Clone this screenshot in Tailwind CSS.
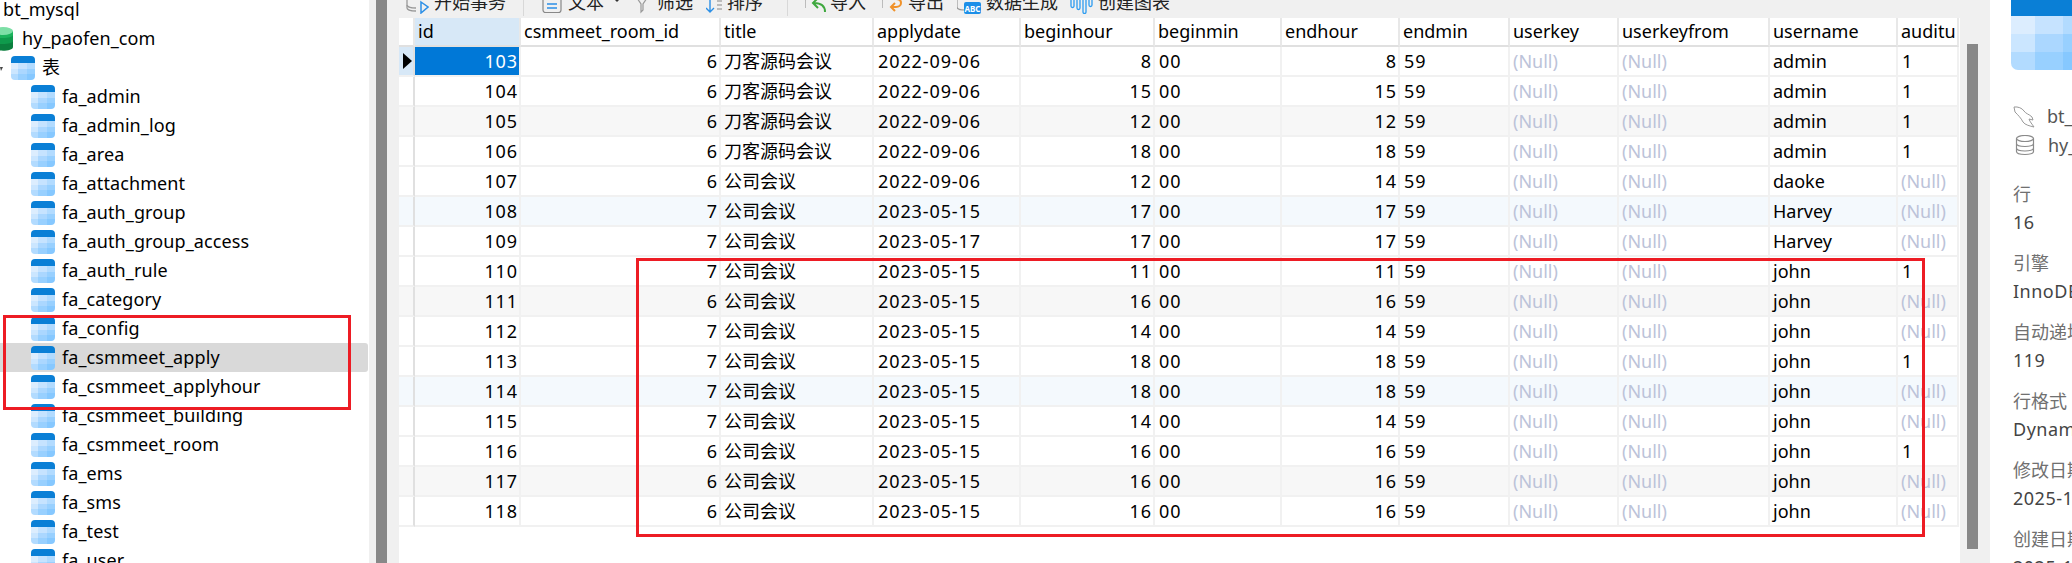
<!DOCTYPE html>
<html lang="zh-CN">
<head>
  <meta charset="UTF-8" />
  <title>Navicat - fa_csmmeet_apply</title>
  <script src="https://cdn.jsdelivr.net/npm/@tailwindcss/browser@4"></script>
</head>
<body class="relative flex w-[2072px] h-[563px] overflow-hidden bg-white text-black text-[18px] font-['Noto_Sans','Noto_Sans_CJK_SC',sans-serif]">

  <!-- shared table icon -->
  <svg class="absolute w-0 h-0">
    <symbol id="tbl" viewBox="0 0 24 24">
      <path d="M0 7V4a4 4 0 0 1 4-4h16a4 4 0 0 1 4 4v3z" fill="#0a7fd6"/>
      <rect x="0" y="7" width="7" height="6" fill="#dcedfe"/>
      <rect x="7" y="7" width="9" height="6" fill="#c6e3ff"/>
      <rect x="16" y="7" width="8" height="6" fill="#b2dbff"/>
      <rect x="0" y="13" width="7" height="5" fill="#cbe6ff"/>
      <rect x="7" y="13" width="9" height="5" fill="#abd7ff"/>
      <rect x="16" y="13" width="8" height="5" fill="#98d0ff"/>
      <path d="M0 18h7v6H4a4 4 0 0 1-4-4z" fill="#b2dbff"/>
      <rect x="7" y="18" width="9" height="6" fill="#98d0ff"/>
      <path d="M16 18h8v2a4 4 0 0 1-4 4h-4z" fill="#86c8ff"/>
    </symbol>
  </svg>

  <!-- connection tree -->
  <aside class="w-[369px] shrink-0 -mt-[5px] tracking-[0.1px]" id="tree">
    <div class="h-[29px] pl-[3px] flex items-center">bt_mysql</div>
    <div class="h-[29px] flex items-center gap-[9px]">
      <svg class="w-[13px] h-[24px] shrink-0" viewBox="7 0 13 24">
        <path d="M0 4h20v16c0 5-20 5-20 0z" fill="#0b7f3e"/>
        <path d="M0 4h20v10c0 4-20 4-20 0z" fill="#0f9a4c"/>
        <path d="M0 4h20v4c0 4-20 4-20 0z" fill="#1bb35c"/>
        <ellipse cx="10" cy="4" rx="10" ry="4" fill="#7ddfa6"/>
      </svg>
      <span>hy_paofen_com</span>
    </div>
    <div class="relative h-[29px] pl-[11px] flex items-center gap-[7px]">
      <svg class="absolute left-0 top-[14px] w-[3px] h-[4px]" viewBox="0 0 3 4"><path d="M0 0h3L1 4z" fill="#444"/></svg>
      <svg class="w-[24px] h-[24px] shrink-0 mt-[1px]"><use href="#tbl"/></svg>
      <span>表</span>
    </div>
  </aside>

  <!-- tree scrollbar -->
  <div class="w-[30px] shrink-0 bg-[#f0f0f0] pl-[7px]">
    <div class="w-[11px] h-full bg-[#888888]"></div>
  </div>

  <main class="w-[1561px] shrink-0 bg-white">
    <!-- toolbar, its upper part is cut off by the crop -->
    <div class="h-[18px] bg-[#f0f0f0] overflow-hidden">
      <div class="-mt-[10px] h-[24px] pl-[7px] flex items-center whitespace-nowrap text-[#222]">
        <svg class="w-[23px] h-[24px] shrink-0" viewBox="0 0 23 24" fill="none">
          <path d="M1 10v8c0 2 5 3 9 3" stroke="#999" stroke-width="1.3"/>
          <path d="M1 15c0 2 5 3 9 3" stroke="#999" stroke-width="1.3"/>
          <path d="M15 12l7 5-7 6z" stroke="#2b8fe6" stroke-width="1.5"/>
        </svg>
        <span class="ml-[5px] w-[72px]">开始事务</span>
        <div class="ml-[17px] w-px h-[26px] self-start bg-[#d8d8d8] shrink-0"></div>
        <svg class="ml-[18px] w-[20px] h-[24px] shrink-0" viewBox="0 0 20 24" fill="none">
          <path d="M1 8v12a2.500 2.500 0 0 0 2.500 2.500h13a2.500 2.500 0 0 0 2.500-2.500V8" stroke="#888" stroke-width="1.2"/>
          <path d="M5 14h10M5 18h10" stroke="#2b8fe6" stroke-width="1.5"/>
        </svg>
        <span class="ml-[6px] w-[36px]">文本</span>
        <svg class="ml-[10px] w-[6px] h-[24px] shrink-0" viewBox="0 0 6 24"><path d="M0 9h6l-3 3z" fill="#333"/></svg>
        <svg class="ml-[17px] w-[10px] h-[24px] shrink-0" viewBox="0 0 10 24" fill="none"><path d="M0 8l4 6v8l2-2v-6l4-6" stroke="#999" stroke-width="1.2"/></svg>
        <span class="ml-[10px] w-[36px]">筛选</span>
        <svg class="ml-[13px] w-[16px] h-[24px] shrink-0" viewBox="0 0 16 24" fill="none">
          <path d="M4 8v14M0 18l4 4 4-4" stroke="#2b8fe6" stroke-width="1.4"/>
          <path d="M11 11h5M11 15h5M11 19h5" stroke="#888" stroke-width="1.2"/>
        </svg>
        <span class="ml-[5px] w-[40px]">排序</span>
        <div class="ml-[20px] w-px h-[26px] self-start bg-[#d8d8d8] shrink-0"></div>
        <svg class="ml-[17px] w-[21px] h-[24px] shrink-0" viewBox="0 0 21 24" fill="none">
          <path d="M3 8c-2 0-3 1-3 3v7" stroke="#999" stroke-width="1.2"/>
          <path d="M20 22c0-6-3-9-11-9M13 8l-5 5 5 5" stroke="#3fa83f" stroke-width="2"/>
        </svg>
        <span class="ml-[4px] w-[36px]">导入</span>
        <svg class="ml-[16px] w-[21px] h-[24px] shrink-0" viewBox="0 0 21 24" fill="none">
          <path d="M3 8c-2 0-3 1-3 3v7" stroke="#999" stroke-width="1.2"/>
          <path d="M9 9h5c4 0 5 2 5 4s-2 4-5 4H9M13 13l-4 4 4 4" stroke="#f0922b" stroke-width="2"/>
        </svg>
        <span class="ml-[5px] w-[36px]">导出</span>
        <div class="relative ml-[13px] w-[24px] h-[24px] shrink-0">
          <svg class="w-[24px] h-[24px]" viewBox="0 0 24 24" fill="none"><path d="M0 8v9c0 2 4 3 8 3" stroke="#999" stroke-width="1.2"/></svg>
          <div class="absolute left-[7px] top-[12px] w-[17px] h-[12px] rounded-[2px] bg-[#1c8fe8] text-white text-[8px] leading-[14px] font-bold text-center overflow-hidden">ABC</div>
        </div>
        <span class="ml-[5px] w-[72px]">数据生成</span>
        <svg class="ml-[12px] w-[23px] h-[24px] shrink-0" viewBox="0 0 23 24" fill="none" stroke="#2b9bf0" stroke-width="1.3">
          <path d="M1 8v8a1.500 1.500 0 0 0 3 0V8M7 8v10a1.500 1.500 0 0 0 3 0V8M13 8v14a1.500 1.500 0 0 0 3 0V8M19 8v7a1.500 1.500 0 0 0 3 0V8"/>
        </svg>
        <span class="ml-[5px]">创建图表</span>
      </div>
    </div>
    <div id="grid" class="grid grid-cols-[16px_106px_200px_153px_147px_134px_127px_118px_110px_109px_151px_128px_61px] w-[1560px]"></div>
  </main>

  <!-- grid scrollbar -->
  <div class="w-[30px] shrink-0 bg-[#f0f0f0] pl-[7px] pt-[44px]">
    <div class="w-[11px] h-[505px] bg-[#888888]"></div>
  </div>

  <!-- object info panel -->
  <section class="flex-1 min-w-0 overflow-hidden whitespace-nowrap">
    <svg class="ml-[21px] w-[61px] h-[70px]" viewBox="0 0 61 70">
      <rect width="61" height="16" fill="#0a7fd6"/>
      <rect y="16" width="24" height="18" fill="#dcedfe"/><rect x="24" y="16" width="28" height="18" fill="#c6e3ff"/><rect x="52" y="16" width="9" height="18" fill="#b2dbff"/>
      <rect y="34" width="24" height="18" fill="#cbe6ff"/><rect x="24" y="34" width="28" height="18" fill="#abd7ff"/><rect x="52" y="34" width="9" height="18" fill="#98d0ff"/>
      <path d="M0 52h24v18H7a7 7 0 0 1-7-7z" fill="#b2dbff"/><rect x="24" y="52" width="28" height="18" fill="#98d0ff"/><rect x="52" y="52" width="9" height="18" fill="#86c8ff"/>
    </svg>
    <div class="mt-[32px] pl-[23px] text-[#555]">
      <div class="h-[29px] flex items-center gap-[12px]">
        <svg class="w-[22px] h-[22px] shrink-0" viewBox="0 0 22 22" fill="none" stroke="#999" stroke-width="1">
          <path d="M1 1c4-.5 8 1 10 4 2 3 5 3 8 6l1 3-4-1c1 3 3 5 5 8-4-1-9-2-11-5C8 12 5 9 2 6z"/>
        </svg>
        <span>bt_mysql</span>
      </div>
      <div class="h-[29px] flex items-center gap-[13px]">
        <svg class="w-[20px] h-[21px] shrink-0 ml-[2px]" viewBox="0 0 20 21" fill="none" stroke="#8a8a8a" stroke-width="1.200">
          <ellipse cx="10" cy="3.500" rx="8.500" ry="3"/>
          <path d="M1.500 3.500v13c0 4 17 4 17 0v-13M1.500 8.500c0 4 17 4 17 0M1.500 13c0 4 17 4 17 0"/>
        </svg>
        <span>hy_paofen_com</span>
      </div>
    </div>
    <div id="info" class="mt-[20px] pl-[23px]"></div>
  </section>

  <!-- red annotation boxes drawn over the screenshot -->
  <div class="absolute left-[3px] top-[315px] w-[348px] h-[95px] border-[3px] border-[#ed1c24]"></div>
  <div class="absolute left-[636px] top-[258px] w-[1289px] h-[279px] border-[3px] border-[#ed1c24]"></div>

  <script>
    const tables = ['fa_admin','fa_admin_log','fa_area','fa_attachment','fa_auth_group','fa_auth_group_access','fa_auth_rule','fa_category','fa_config','fa_csmmeet_apply','fa_csmmeet_applyhour','fa_csmmeet_building','fa_csmmeet_room','fa_ems','fa_sms','fa_test','fa_user'];
    document.getElementById('tree').insertAdjacentHTML('beforeend', tables.map(name => `
      <div class="h-[29px] pl-[31px] flex items-center gap-[7px] ${name === 'fa_csmmeet_apply' ? 'bg-[#d9d9d9] rounded-r-[3px] w-[368px]' : ''}">
        <svg class="w-[24px] h-[24px] shrink-0 mt-[1px]"><use href="#tbl"/></svg>
        <span>${name}</span>
      </div>`).join(''));

    const long = '刀客源码会议', short = '公司会议';
    const rows = [
      [103,6,long,'2022-09-06',8,8,'admin',1],
      [104,6,long,'2022-09-06',15,15,'admin',1],
      [105,6,long,'2022-09-06',12,12,'admin',1],
      [106,6,long,'2022-09-06',18,18,'admin',1],
      [107,6,short,'2022-09-06',12,14,'daoke',null],
      [108,7,short,'2023-05-15',17,17,'Harvey',null],
      [109,7,short,'2023-05-17',17,17,'Harvey',null],
      [110,7,short,'2023-05-15',11,11,'john',1],
      [111,6,short,'2023-05-15',16,16,'john',null],
      [112,7,short,'2023-05-15',14,14,'john',null],
      [113,7,short,'2023-05-15',18,18,'john',1],
      [114,7,short,'2023-05-15',18,18,'john',null],
      [115,7,short,'2023-05-15',14,14,'john',null],
      [116,6,short,'2023-05-15',16,16,'john',1],
      [117,6,short,'2023-05-15',16,16,'john',null],
      [118,6,short,'2023-05-15',16,16,'john',null],
    ];
    const heads = ['id','csmmeet_room_id','title','applydate','beginhour','beginmin','endhour','endmin','userkey','userkeyfrom','username','auditu'];

    const headCell = 'h-[29px] px-[3px] flex items-center overflow-hidden whitespace-nowrap border-b-2 border-r-2 border-b-[#e0e0e0] border-r-[#e8e8e8]';
    let html = `<div class="${headCell}"></div>`;
    heads.forEach((h, i) => {
      html += `<div class="${headCell} ${i === 0 ? 'bg-[#d7e8f7]' : ''}">${h}</div>`;
    });

    const cell = 'h-[30px] pl-[3px] pr-[1px] flex items-center overflow-hidden whitespace-nowrap border-b-2 border-r-2 border-[#f1f1f1]';
    const num = 'justify-end tracking-[0.9px]';
    const date = 'tracking-[0.9px] pl-[4px]';
    const nul = 'text-[#bcc3d9]';
    rows.forEach((r, i) => {
      const bg = i % 6 === 2 ? 'bg-[#f7f7f7]' : i % 6 === 5 ? 'bg-[#f4f9fd]' : '';
      const n = `<div class="${cell} ${bg} ${nul}">(Null)</div>`;
      const marker = i === 0
        ? `<div class="${cell} bg-[#d7e8f7] border-r-[#e0e0e0] justify-center"><svg class="w-[9px] h-[16px]" viewBox="0 0 9 16"><path d="M0 0l9 8-9 8z" fill="#000"/></svg></div>`
        : `<div class="${cell} ${bg} border-r-[#e0e0e0]"></div>`;
      html += marker
        + `<div class="${cell} ${num} ${i === 0 ? 'bg-[#0078d7] text-white' : bg}">${r[0]}</div>`
        + `<div class="${cell} ${bg} ${num}">${r[1]}</div>`
        + `<div class="${cell} ${bg}">${r[2]}</div>`
        + `<div class="${cell} ${bg} ${date}">${r[3]}</div>`
        + `<div class="${cell} ${bg} ${num}">${r[4]}</div>`
        + `<div class="${cell} ${bg} ${date}">00</div>`
        + `<div class="${cell} ${bg} ${num}">${r[5]}</div>`
        + `<div class="${cell} ${bg} ${date}">59</div>`
        + n + n
        + `<div class="${cell} ${bg}">${r[6]}</div>`
        + (r[7] === null ? n : `<div class="${cell} ${bg} ${date}">1</div>`);
    });
    document.getElementById('grid').innerHTML = html;

    const info = [['行','16'],['引擎','InnoDB'],['自动递增','119'],['行格式','Dynamic'],['修改日期','2025-12-01'],['创建日期','2025-12-01']];
    document.getElementById('info').innerHTML = info.map(([k, v]) => `
      <div class="h-[69px]">
        <div class="h-[28px] leading-[28px] text-[#707070]">${k}</div>
        <div class="h-[28px] leading-[28px] text-[#444] tracking-[0.5px]">${v}</div>
      </div>`).join('');
  </script>
</body>
</html>
